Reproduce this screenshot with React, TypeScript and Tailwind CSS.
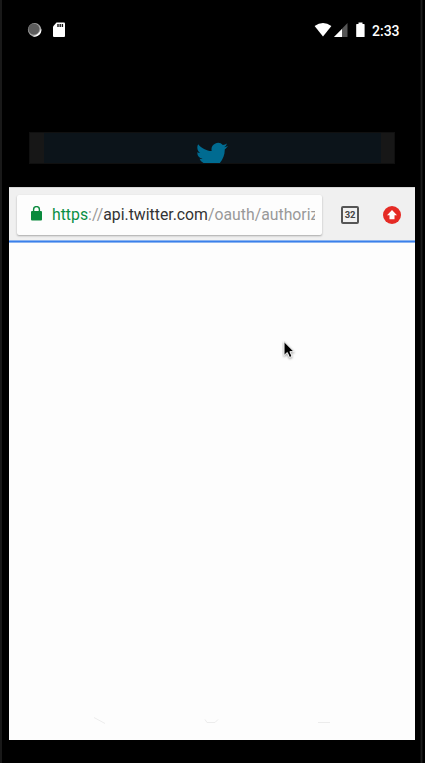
function StatusBar() {
  return (
    <header className="flex h-[60px] items-center pl-[25px] pr-[25px] text-white">
      <svg className="h-4 w-4" viewBox="0 0 16 16">
        <circle cx="7.6" cy="7.8" r="6.7" fill="#a8a8a8" />
        <path d="M14.200 6.400A6.800 6.800 0 0 1 5.200 14.200Q12 13.400 14.200 6.400Z" fill="#fff" />
        <circle cx="6.9" cy="7.1" r="5.6" fill="#5c5c5c" />
      </svg>
      <svg className="ml-[7px] h-4 w-4" viewBox="0 0 16 16">
        <path d="M6.500 .5H14q1 0 1 1v12.500q0 1-1 1H4q-1 0-1-1V4.500Z" fill="#fff" />
        <path d="M8 2v3M10.200 2v3M12.400 2v3" stroke="#111" strokeWidth="1.400" />
      </svg>
      <div className="ml-auto flex items-center">
        <svg className="h-4 w-[18px]" viewBox="0 0 18 16">
          <path d="M.6 4.100Q9-2.100 17.400 4.100L9 14.600Z" fill="#fff" />
        </svg>
        <svg className="ml-0.5 h-4 w-[14px]" viewBox="0 0 14 16">
          <path d="M13.500 1v14H0Z" fill="#555" />
          <path d="M8 7v8H0Z" fill="#fff" />
        </svg>
        <svg className="ml-2 h-4 w-[9px]" viewBox="0 0 9 16">
          <path d="M2.500 .5h4v1.400H8q.6 0 .6.6v12q0 .5-.6.5H.8q-.6 0-.6-.5v-12q0-.6.6-.6h1.700Z" fill="#fff" />
        </svg>
        <time className="ml-[7px] w-[28px] whitespace-nowrap pt-px text-[14px] font-medium leading-4">2:33</time>
      </div>
    </header>
  );
}

function TwitterBanner() {
  return (
    <div className="mx-[27px] mt-[72px] h-[32px] w-[366px] border border-[#101010] bg-[#171717] pl-[14px] pr-[13px]">
      <div className="flex h-full justify-center overflow-hidden bg-[#0c141a]">
        <svg className="mr-px mt-[9px] h-[32px] w-[32px] shrink-0" viewBox="0 1.500 24 24" fill="#006b91">
          <path d="M23.950 4.570a10 10 0 0 1-2.825.775 4.958 4.958 0 0 0 2.163-2.723c-.951.555-2.005.959-3.127 1.184a4.920 4.920 0 0 0-8.384 4.482C7.690 8.095 4.067 6.130 1.640 3.162a4.822 4.822 0 0 0-.666 2.475c0 1.710.870 3.213 2.188 4.096a4.904 4.904 0 0 1-2.228-.616v.060a4.923 4.923 0 0 0 3.946 4.827 4.996 4.996 0 0 1-2.212.085 4.936 4.936 0 0 0 4.604 3.417 9.867 9.867 0 0 1-6.102 2.105c-.390 0-.779-.023-1.170-.067a13.995 13.995 0 0 0 7.557 2.209c9.053 0 13.998-7.496 13.998-13.985 0-.210 0-.420-.015-.630A9.935 9.935 0 0 0 24 4.590Z" />
        </svg>
      </div>
    </div>
  );
}

function AddressBar() {
  return (
    <div className="flex h-[53px] items-center border-t border-[#d8d8d8] bg-[#f0f0f0] pl-2 pr-[14px] pt-px">
      <div className="flex h-10 w-[305px] items-center rounded-[2px] bg-[#fdfdfd] pl-[14px] shadow-[0_1px_2px_rgba(0,0,0,0.3)]">
        <svg className="mb-[2px] h-[15px] w-[11px] shrink-0" viewBox="0 0 11 15">
          <rect y="5" width="11" height="9.500" rx="1" fill="#0a8a3d" />
          <path d="M2.600 6V3.500a2.900 2.900 0 0 1 5.800 0V6" fill="none" stroke="#0a8a3d" strokeWidth="1.400" />
        </svg>
        <div className="ml-[10px] w-[263px] overflow-hidden whitespace-nowrap text-[15.800px] leading-6 text-[#999]">
          <span className="text-[#0a9044]">https</span>://<span className="text-[#333]">api.twitter.com</span>/oauth/authorize
        </div>
      </div>
      <div className="ml-[19px] flex h-[18px] w-[18px] items-center justify-center rounded-[2px] border-2 border-[#555] text-[9.500px] font-bold leading-none tracking-[-0.3px] text-[#444]">
        32
      </div>
      <svg className="ml-auto h-[18px] w-[18px]" viewBox="0 0 18 18">
        <circle cx="9" cy="9" r="9" fill="#e52b25" />
        <path d="M9 4 14 9.200H11.500v4h-5v-4H4Z" fill="#fff" />
      </svg>
    </div>
  );
}

export default function App() {
  return (
    <main className="relative h-[763px] w-[425px] overflow-hidden border-l-2 border-[#191919] bg-black font-['Roboto',sans-serif]">
      <StatusBar />
      <TwitterBanner />
      <section className="ml-[7px] mt-[23px] flex h-[553px] w-[406px] flex-col bg-[#fdfdfd]">
        <AddressBar />
        <div className="h-[3px] border-y border-[#8cb4f0] bg-[#3b80eb]" />
        <div className="mt-auto flex h-[24px] items-start text-[#ececec]">
          <svg className="ml-[84px] h-2 w-[13px]" viewBox="0 0 13 8" fill="none" stroke="currentColor">
            <path d="m1 1.500 11 6" />
          </svg>
          <svg className="ml-[98px] h-2 w-4" viewBox="0 0 16 8" fill="none" stroke="currentColor">
            <path d="M1 3.500 3 6.500h8l3-3" />
          </svg>
          <div className="ml-[98px] mt-[6px] h-px w-3 bg-[#ececec]" />
        </div>
      </section>
      <div className="absolute right-[2px] top-0 h-full w-[3px] border-x border-[#0d0d0d] bg-[#1d1d1d]" />
      <svg className="absolute left-[280px] top-[339px] h-[22px] w-[16px]" viewBox="0 0 16 22">
        <path d="M2 2.500v14l3.300-3 2.200 5 2.600-1.100-2.200-4.700h4.200Z" fill="#000" stroke="#fff" strokeWidth="1" style={{ filter: "drop-shadow(0 1px 1px #0006)" }} />
      </svg>
    </main>
  );
}
